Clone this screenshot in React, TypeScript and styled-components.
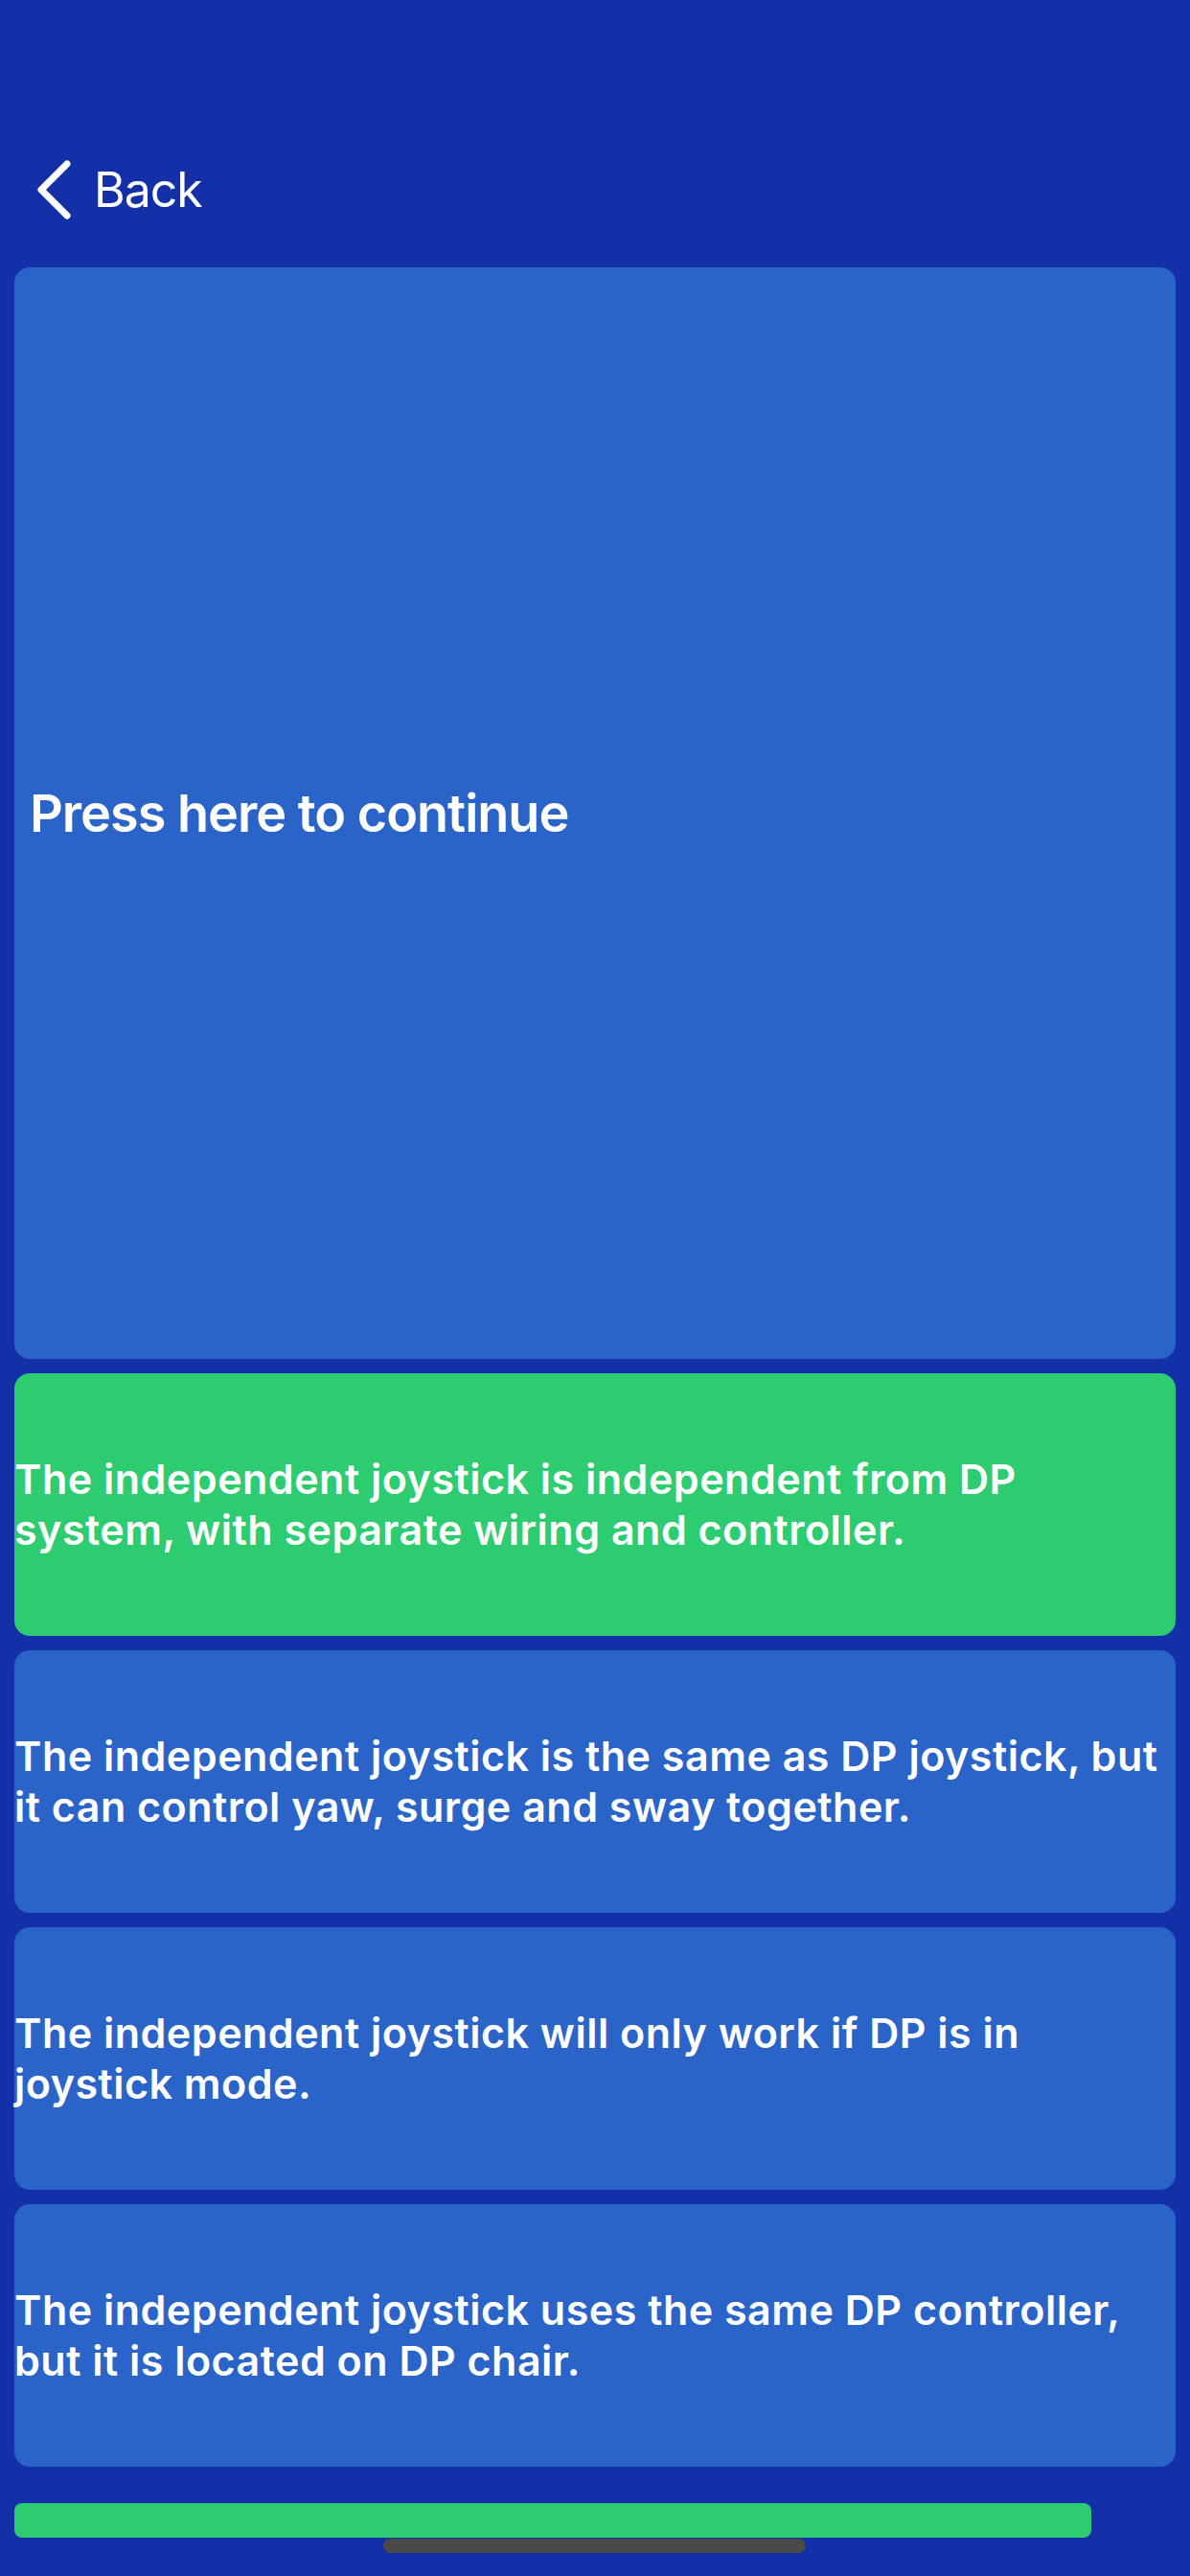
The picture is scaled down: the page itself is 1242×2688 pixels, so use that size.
import styled, { createGlobalStyle } from "styled-components"

const GlobalStyle = createGlobalStyle`
  html, body {
    margin: 0;
    padding: 0;
    background: #1330a9;
  }
  body {
    font-family: Inter, "Noto Sans", sans-serif;
    color: #ffffff;
  }
`

const Screen = styled.div`
  position: relative;
  width: 1242px;
  height: 2688px;
  overflow: hidden;
  background: #1330a9;
  display: flex;
  flex-direction: column;
  padding: 0 15px;
  box-sizing: border-box;
`

const Header = styled.div`
  height: 279px;
  display: flex;
  align-items: flex-start;
  padding-top: 167px;
  box-sizing: border-box;
`

const BackButton = styled.button`
  display: flex;
  align-items: center;
  gap: 21px;
  background: none;
  border: none;
  padding: 0 0 0 22px;
  margin: 0;
  color: #ffffff;
  font-family: Inter, "Noto Sans", sans-serif;
  font-size: 50px;
  font-weight: 400;
  line-height: 56px;
  letter-spacing: -1px;
  cursor: pointer;
`

const List = styled.div`
  display: flex;
  flex-direction: column;
  gap: 15px;
`

const Card = styled.div<{ $tall?: boolean; $correct?: boolean }>`
  height: ${(p) => (p.$tall ? 1139 : 274)}px;
  background: ${(p) => (p.$correct ? "#2ecc71" : "#2a64c8")};
  border-radius: 16px;
  display: flex;
  align-items: center;
  padding: ${(p) => (p.$tall ? "0 16px" : "0")};
  box-sizing: border-box;
`

const PromptText = styled.div`
  font-size: 54px;
  font-weight: 600;
  letter-spacing: -1px;
`

const AnswerText = styled.div`
  font-size: 43px;
  font-weight: 600;
  line-height: 53px;
  letter-spacing: 0.5px;
`

const NextBar = styled.div`
  margin-top: 38px;
  width: 1124px;
  height: 36px;
  background: #2ecc71;
  border-radius: 8px;
`

const HomeIndicator = styled.div`
  position: absolute;
  left: 400px;
  top: 2649px;
  width: 441px;
  height: 15px;
  border-radius: 8px;
  background: #4a4a4a;
`

const answers = [
  {
    text: "The independent joystick is independent from DP system, with separate wiring and controller.",
    correct: true,
  },
  {
    text: "The independent joystick is the same as DP joystick, but it can control yaw, surge and sway together.",
    correct: false,
  },
  {
    text: "The independent joystick will only work if DP is in joystick mode.",
    correct: false,
  },
  {
    text: "The independent joystick uses the same DP controller, but it is located on DP chair.",
    correct: false,
  },
]

function Chevron() {
  return (
    <svg width="40" height="62" viewBox="0 0 40 62">
      <path
        d="M33 4 L6 31 L33 58"
        fill="none"
        stroke="#ffffff"
        strokeWidth="7"
        strokeLinecap="round"
        strokeLinejoin="round"
      />
    </svg>
  )
}

function App() {
  return (
    <>
      <GlobalStyle />
      <Screen>
        <Header>
          <BackButton>
            <Chevron />
            Back
          </BackButton>
        </Header>
        <List>
          <Card $tall>
            <PromptText>Press here to continue</PromptText>
          </Card>
          {answers.map((a) => (
            <Card key={a.text} $correct={a.correct}>
              <AnswerText>{a.text}</AnswerText>
            </Card>
          ))}
        </List>
        <NextBar />
        <HomeIndicator />
      </Screen>
    </>
  )
}

export default App
